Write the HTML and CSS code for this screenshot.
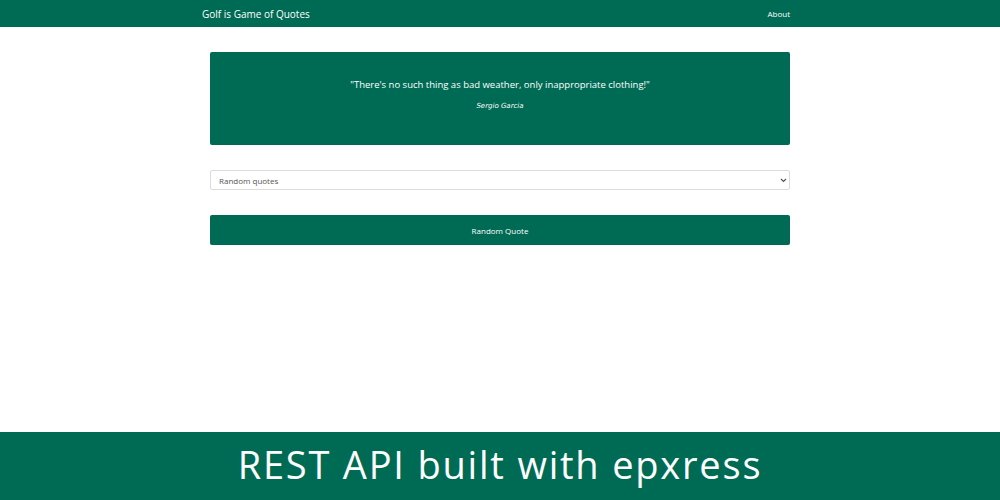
FILE: index.html
```html
<!DOCTYPE html>
<html>
<head>
<meta charset="utf-8">
<link rel="stylesheet" href="styles.css">
</head>
<body>
<div class="page">
  <nav class="navbar">
    <div class="nav-inner">
      <span class="brand">Golf is Game of Quotes</span>
      <span class="nav-link">About</span>
    </div>
  </nav>
  <main class="main">
    <div class="quote-card">
      <p class="quote">"There's no such thing as bad weather, only inappropriate clothing!"</p>
      <p class="author">Sergio Garcia</p>
    </div>
    <div class="select">
      <span>Random quotes</span>
      <svg class="chev" width="7" height="5" viewBox="0 0 7 5"><path d="M1 1l2.5 2.5L6 1" fill="none" stroke="#555" stroke-width="1.2"/></svg>
    </div>
    <div class="btn">Random Quote</div>
  </main>
  <footer class="banner">REST API built with epxress</footer>
</div>
</body>
</html>
```
FILE: styles.css
```css
* { box-sizing: border-box; }
html, body { margin: 0; padding: 0; }
body { font-family: "Open Sans", "Noto Sans", sans-serif; background: #fff; }
.page { height: 500px; display: flex; flex-direction: column; }
.navbar { background: #006b54; height: 27px; flex: none; }
.nav-inner { width: 596px; margin: 0 auto; height: 100%; display: flex; align-items: center; justify-content: space-between; padding: 0 8px 0 0; }
.brand { color: #fff; font-size: 10px; }
.nav-link { color: #fff; font-size: 8px; }
.main { flex: 1; width: 580px; margin: 0 auto; padding-top: 25px; }
.quote-card { background: #006b54; height: 93px; border-radius: 2px; display: flex; flex-direction: column; align-items: center; padding-top: 27px; }
.quote { margin: 0; color: #fff; font-size: 9.5px; line-height: 12px; }
.author { margin: 11px 0 0; color: #fff; font-size: 7px; font-family: "DejaVu Sans", sans-serif; font-style: italic; }
.select { margin-top: 25px; height: 20px; border: 1px solid #dcdcdc; border-radius: 2px; display: flex; align-items: center; justify-content: space-between; padding: 0 2px 0 8px; font-size: 8px; color: #555; }
.btn { margin-top: 25px; height: 30px; background: #006b54; border-radius: 2px; display: flex; align-items: center; justify-content: center; color: #fff; font-size: 8px; }
.banner { flex: none; height: 68px; background: #006b54; color: #fff; display: flex; align-items: center; justify-content: center; font-family: "Open Sans", sans-serif; font-weight: 500; font-size: 38px; letter-spacing: 1.8px; padding-bottom: 4px; }
```
